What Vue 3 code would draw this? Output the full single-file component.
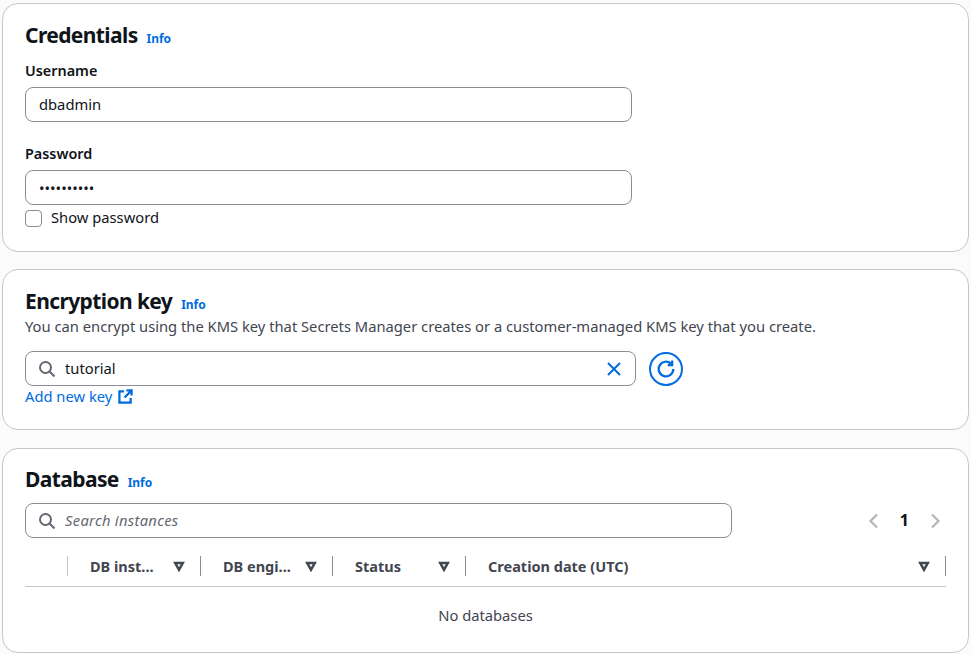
<template>
  <div class="page">
    <section class="card cred">
      <h2 class="title">Credentials <a class="info">Info</a></h2>
      <label class="label">Username</label>
      <div class="input wide">dbadmin</div>
      <label class="label second">Password</label>
      <div class="input wide dots">••••••••••</div>
      <div class="check"><span class="box"></span>Show password</div>
    </section>

    <section class="card enc">
      <h2 class="title">Encryption key <a class="info">Info</a></h2>
      <p class="desc">You can encrypt using the KMS key that Secrets Manager creates or a customer-managed KMS key that you create.</p>
      <div class="key-row">
        <div class="input search key">
          <svg class="icon" viewBox="0 0 16 16"><circle cx="6.5" cy="6.5" r="5.5" /><path d="M10.5 10.5 15.5 15.5" /></svg>
          <span class="grow">tutorial</span>
          <svg class="clear" viewBox="0 0 16 16"><path d="M2 2l12 12M14 2 2 14" /></svg>
        </div>
        <button class="refresh">
          <svg viewBox="0 0 16 16"><path d="M14.5 8A6.5 6.5 0 1 1 12.6 3.4" /><path d="M13.5 .5v4h-4" /></svg>
        </button>
      </div>
      <a class="add">Add new key
        <svg viewBox="0 0 16 16"><path d="M6.5 2.5H1.5v12h12V9.5" /><path d="M9 1.5h5.5V7M14 2 7 9" /></svg>
      </a>
    </section>

    <section class="card db">
      <h2 class="title">Database <a class="info">Info</a></h2>
      <div class="tools">
        <div class="input search find">
          <svg class="icon" viewBox="0 0 16 16"><circle cx="6.5" cy="6.5" r="5.5" /><path d="M10.5 10.5 15.5 15.5" /></svg>
          <em>Search instances</em>
        </div>
        <div class="pager">
          <svg viewBox="0 0 16 16"><path d="M11 1.5 4.5 8l6.5 6.5" /></svg>
          <b>1</b>
          <svg viewBox="0 0 16 16"><path d="M5 1.5 11.5 8 5 14.5" /></svg>
        </div>
      </div>
      <div class="thead">
        <div v-for="col in columns" :key="col.name" class="th" :style="{ width: col.width + 'px' }">
          <span class="name">{{ col.name }}</span>
          <svg v-if="col.name" class="sort" viewBox="0 0 16 16"><path d="M3 4h10l-5 9z" /></svg>
        </div>
      </div>
      <div class="empty">No databases</div>
    </section>
  </div>
</template>

<script setup>
const columns = [
  { name: '', width: 43 },
  { name: 'DB inst...', width: 133 },
  { name: 'DB engi...', width: 132 },
  { name: 'Status', width: 133 },
  { name: 'Creation date (UTC)', width: 480 }
]
</script>

<style scoped>
.page {
  display: flex;
  flex-direction: column;
  gap: 17px;
  width: 969px;
  height: 654px;
  padding: 3px 0 0 2px;
  box-sizing: border-box;
  font-family: "Noto Sans", sans-serif;
  font-size: 14.74px;
  line-height: 20px;
  color: #0f141a;
}
.card {
  box-sizing: border-box;
  border: 1px solid #c6c6cd;
  border-radius: 16px;
  background: #fff;
  padding: 18px 22px 0;
}
.cred { height: 249px; }
.enc { height: 161px; }
.db {
  height: 205px;
  margin-top: 1px;
  padding-top: 17px;
}
.title {
  height: 31px;
  margin: 0;
  font-size: 21px;
  line-height: 26px;
  font-weight: 700;
  letter-spacing: -0.6px;
}
.info {
  margin-left: 4px;
  font-size: 12px;
  letter-spacing: 0;
  color: #006ce0;
}
.label {
  display: block;
  margin: 8px 0 6px;
  font-weight: 600;
  font-size: 14.4px;
}
.label.second { margin-top: 22px; }
.input {
  box-sizing: border-box;
  height: 35px;
  border: 1px solid #8c8c94;
  border-radius: 8px;
  padding: 6px 13px;
  background: #fff;
}
.wide { width: 607px; }
.dots { padding-top: 7px; }
.check {
  display: flex;
  align-items: center;
  gap: 9px;
  height: 20px;
  margin-top: 2px;
}
.box {
  width: 15px;
  height: 15px;
  margin-top: 2px;
  border: 1px solid #8c8c94;
  border-radius: 4px;
}
.desc {
  margin: -3px 0 0;
  color: #424650;
}
.key-row {
  display: flex;
  align-items: center;
  gap: 13px;
  margin-top: 15px;
}
.search {
  display: flex;
  align-items: center;
  gap: 10px;
  padding-bottom: 7px;
}
.search .icon, .search .clear { margin-bottom: -1px; }
.key { width: 611px; }
.grow { flex: 1; }
.icon {
  width: 16px;
  height: 16px;
  fill: none;
  stroke: #656871;
  stroke-width: 2;
}
.clear {
  width: 16px;
  height: 16px;
  fill: none;
  stroke: #006ce0;
  stroke-width: 2;
}
.refresh {
  display: flex;
  align-items: center;
  justify-content: center;
  width: 34px;
  height: 34px;
  padding: 0;
  border: 2px solid #006ce0;
  border-radius: 50%;
  background: #fff;
}
.refresh svg {
  width: 18px;
  height: 18px;
  fill: none;
  stroke: #006ce0;
  stroke-width: 2;
}
.add {
  display: flex;
  align-items: center;
  gap: 6px;
  color: #006ce0;
}
.add svg {
  width: 15px;
  height: 15px;
  fill: none;
  stroke: #006ce0;
  stroke-width: 2.4;
}
.tools {
  display: flex;
  align-items: center;
  justify-content: space-between;
  margin-top: 6px;
}
.find { width: 707px; }
.find em {
  color: #656871;
  letter-spacing: 0.3px;
}
.pager {
  display: flex;
  align-items: center;
  gap: 18px;
  margin-right: 3px;
}
.pager svg {
  width: 16px;
  height: 16px;
  fill: none;
  stroke: #b4b4bb;
  stroke-width: 2.2;
}
.pager b {
  margin-top: -2px;
  font-weight: 700;
  font-size: 16px;
}
.thead {
  display: flex;
  width: 921px;
  height: 40px;
  margin-top: 8px;
  align-items: center;
  border-bottom: 1px solid #c6c6cd;
  color: #424650;
  font-weight: 700;
  font-size: 14.5px;
}
.th {
  box-sizing: border-box;
  display: flex;
  align-items: center;
  height: 20px;
  padding: 0 15px 0 22px;
  border-right: 1px solid #c6c6cd;
}
.th:not(:first-child) { border-right-color: #8c8c94; }
.name { flex: 1; }
.sort {
  width: 12px;
  height: 12px;
  fill: none;
  stroke: #424650;
  stroke-width: 3.4;
}
.empty {
  text-align: center;
  width: 921px;
  margin-top: 18px;
  color: #424650;
}
</style>

<style>
body { background: #fbfbfb; }
</style>
